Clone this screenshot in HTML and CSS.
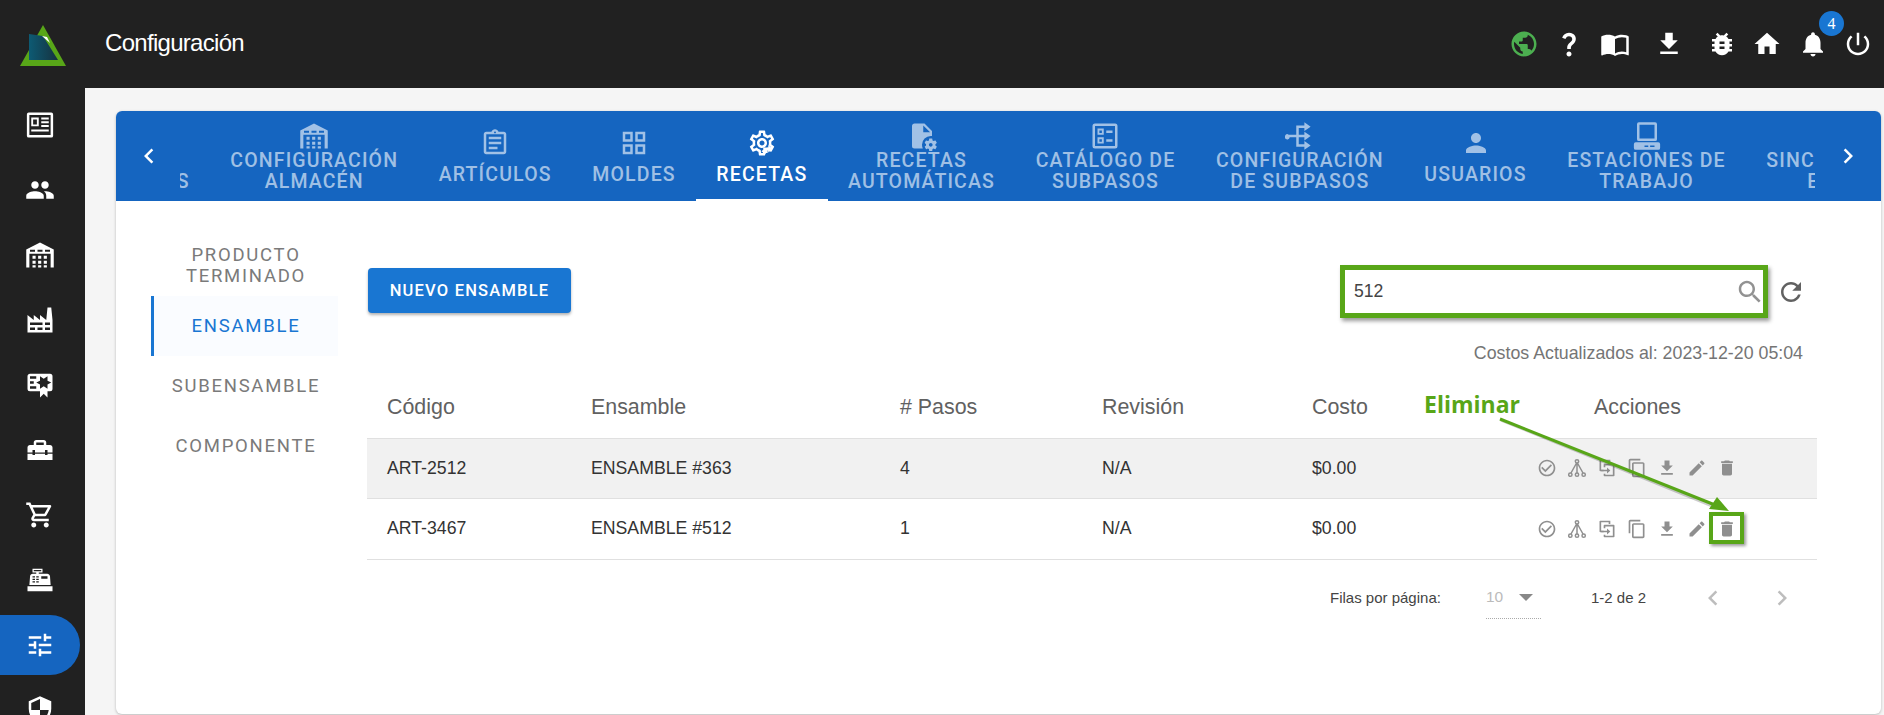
FILE: index.html
```html
<!DOCTYPE html>
<html lang="es">
<head>
<meta charset="utf-8">
<title>Configuración</title>
<link rel="stylesheet" href="styles.css">
</head>
<body>
<svg class="sprite" aria-hidden="true">
  <defs>
    <linearGradient id="logoGrad" x1="0" y1="0" x2="1" y2="0"><stop offset="0" stop-color="#0d5a73"/><stop offset="1" stop-color="#16323f"/></linearGradient>
  </defs>
  <symbol id="i-news" viewBox="0 0 24 24"><path fill-rule="evenodd" d="M3 2h18a1.500 1.500 0 0 1 1.500 1.500v17a1.500 1.500 0 0 1-1.500 1.500H3a1.500 1.500 0 0 1-1.500-1.500v-17A1.500 1.500 0 0 1 3 2zm.5 2v16h17V4zM5 6h6v7H5zm1.500 1.500v4h3v-4zM13 6h6v1.600h-6zm0 3h6v1.600h-6zm0 3h6v1.600h-6zM5 15.500h14v1.600H5z"/></symbol>
  <symbol id="i-group" viewBox="0 0 24 24"><path d="M16 11c1.660 0 2.990-1.340 2.990-3S17.660 5 16 5c-1.660 0-3 1.340-3 3s1.340 3 3 3zm-8 0c1.660 0 2.990-1.340 2.990-3S9.660 5 8 5C6.340 5 5 6.340 5 8s1.340 3 3 3zm0 2c-2.330 0-7 1.170-7 3.500V19h14v-2.500c0-2.330-4.670-3.500-7-3.500zm8 0c-.29 0-.62.02-.97.05 1.160.84 1.970 1.970 1.970 3.450V19h6v-2.500c0-2.330-4.670-3.500-7-3.500z"/></symbol>
  <symbol id="i-warehouse" viewBox="0 0 24 24"><path fill-rule="evenodd" d="M12 2 1 7.500V22h2.500v-11h17v11H23V7.500zM4 7.800h4v1.500H4zm6 0h4v1.500h-4zm6 0h4v1.500h-4zM6 12.500h2.500V15H6zm4.500 0H13V15h-2.500zm4.500 0h2.500V15H15zm-9 4h2.500V19H6zm4.500 0H13V19h-2.500zm4.500 0h2.500V19H15zm-9 3.700h2.500V22H6zm4.500 0H13V22h-2.500zm4.500 0h2.500V22H15z"/></symbol>
  <symbol id="i-factory" viewBox="0 0 24 24"><path fill-rule="evenodd" d="M2 22V8l5 4V8l5 4V8l5 4 1-10h3l1 10v10zm2-8v2h10v-2zm12 0v2h4v-2zM4 18v2h4v-2zm6 0v2h4v-2zm6 0v2h4v-2z"/></symbol>
  <symbol id="i-cert" viewBox="0 0 24 24"><path fill-rule="evenodd" d="M4 3C2.890 3 2 3.890 2 5v10a2 2 0 0 0 2 2h8v5l3-3 3 3v-5h2a2 2 0 0 0 2-2V5a2 2 0 0 0-2-2zm8 2 3 2 3-2v3.500l3 1.500-3 1.500V15l-3-2-3 2v-3.500L9 10l3-1.500zM4 5h5v2H4zm0 4h3v2H4zm0 4h5v2H4z"/></symbol>
  <symbol id="i-toolbox" viewBox="0 0 24 24"><path d="M18 16h-2v-1H8v1H6v-1H2v5h20v-5h-4v1zm2-8h-3V6c0-1.100-.9-2-2-2H9C7.900 4 7 4.900 7 6v2H4c-1.100 0-2 .9-2 2v4h4v-2h2v2h8v-2h2v2h4v-4c0-1.100-.9-2-2-2zm-5 0H9V6h6v2z"/></symbol>
  <symbol id="i-cart" viewBox="0 0 24 24"><path d="M15.550 13c.75 0 1.410-.41 1.750-1.030l3.580-6.490c.37-.66-.11-1.480-.87-1.480H5.210l-.94-2H1v2h2l3.600 7.590-1.350 2.440C4.520 15.370 5.480 17 7 17h12v-2H7l1.100-2h7.450zM6.160 6h12.150l-2.760 5H8.530L6.160 6zM7 18c-1.100 0-1.990.9-1.990 2S5.900 22 7 22s2-.9 2-2-.9-2-2-2zm10 0c-1.100 0-1.990.9-1.990 2s.89 2 1.990 2 2-.9 2-2-.9-2-2-2z"/></symbol>
  <symbol id="i-register" viewBox="0 0 24 24"><path fill-rule="evenodd" d="M2 17h20v4H2zM6.250 7H9V6H6V3h8v3h-3v1h6.800c1 0 2 1 2.200 2l.5 7h-17l.55-7c0-1 1-2 2.200-2zM13 9v2h5V9zM6 9v1h2V9zm3 0v1h2V9zm-3 2v1h2v-1zm3 0v1h2v-1zm-3 2v1h2v-1zm3 0v1h2v-1zM7 4v1h6V4z"/></symbol>
  <symbol id="i-tune" viewBox="0 0 24 24"><path d="M3 17v2h6v-2H3zM3 5v2h10V5H3zm10 16v-2h8v-2h-8v-2h-2v6h2zM7 9v2H3v2h4v2h2V9H7zm14 4v-2H11v2h10zm-6-4h2V7h4V5h-4V3h-2v6z"/></symbol>
  <symbol id="i-shield" viewBox="0 0 24 24"><path d="M12 1 3 5v6c0 5.550 3.840 10.740 9 12 5.160-1.260 9-6.450 9-12V5l-9-4zm0 10.990h7c-.53 4.120-3.280 7.790-7 8.940V12H5V6.300l7-3.110v8.800z"/></symbol>
  <symbol id="i-public" viewBox="0 0 24 24"><path d="M12 2C6.480 2 2 6.480 2 12s4.480 10 10 10 10-4.480 10-10S17.520 2 12 2zm-1 17.930c-3.950-.49-7-3.850-7-7.930 0-.62.08-1.210.21-1.790L9 15v1c0 1.100.9 2 2 2v1.930zm6.900-2.540c-.26-.81-1-1.390-1.900-1.390h-1v-3c0-.55-.45-1-1-1H8v-2h2c.55 0 1-.45 1-1V7h2c1.100 0 2-.9 2-2v-.41c2.930 1.190 5 4.060 5 7.410 0 2.080-.8 3.970-2.100 5.390z"/></symbol>
  <symbol id="i-help" viewBox="0 0 24 24"><path d="M11.070 12.850c.77-1.390 2.250-2.210 3.110-3.440.91-1.290.4-3.700-2.180-3.700-1.690 0-2.520 1.280-2.870 2.340L6.540 6.960C7.250 4.830 9.180 3 11.990 3c2.350 0 3.960 1.070 4.780 2.410.7 1.150 1.110 3.300.03 4.900-1.200 1.770-2.350 2.310-2.970 3.450-.25.46-.35.76-.35 2.240h-2.890c-.01-.78-.13-2.050.48-3.150zM14 20c0 1.100-.9 2-2 2s-2-.9-2-2 .9-2 2-2 2 .9 2 2z"/></symbol>
  <symbol id="i-book" viewBox="0 0 24 24"><path d="M21 5c-1.110-.35-2.330-.5-3.500-.5-1.950 0-4.050.4-5.500 1.500-1.450-1.100-3.550-1.500-5.500-1.500S2.450 4.900 1 6v14.650c0 .25.25.5.5.5.1 0 .15-.05.25-.05C3.100 20.450 5.050 20 6.500 20c1.950 0 4.050.4 5.500 1.500 1.350-.85 3.800-1.500 5.500-1.500 1.650 0 3.350.3 4.750 1.050.1.05.15.05.25.05.25 0 .5-.25.5-.5V6c-.6-.45-1.250-.75-2-1zm0 13.500c-1.100-.35-2.300-.5-3.500-.5-1.700 0-4.150.65-5.500 1.500V8c1.350-.85 3.800-1.500 5.500-1.500 1.200 0 2.400.15 3.500.5v11.500z"/></symbol>
  <symbol id="i-download" viewBox="0 0 24 24"><path d="M19 9h-4V3H9v6H5l7 7 7-7zM5 18v2h14v-2H5z"/></symbol>
  <symbol id="i-bug" viewBox="0 0 24 24"><path d="M20 8h-2.810c-.45-.78-1.070-1.450-1.820-1.960L17 4.410 15.590 3l-2.170 2.170C12.960 5.060 12.490 5 12 5c-.49 0-.96.06-1.410.17L8.410 3 7 4.410l1.620 1.630C7.880 6.550 7.260 7.220 6.810 8H4v2h2.090c-.05.33-.09.66-.09 1v1H4v2h2v1c0 .34.04.67.09 1H4v2h2.810c1.040 1.790 2.970 3 5.190 3s4.150-1.210 5.190-3H20v-2h-2.090c.05-.33.09-.66.09-1v-1h2v-2h-2v-1c0-.34-.04-.67-.09-1H20V8zm-6 8h-4v-2h4v2zm0-4h-4v-2h4v2z"/></symbol>
  <symbol id="i-home" viewBox="0 0 24 24"><path d="M10 20v-6h4v6h5v-8h3L12 3 2 12h3v8z"/></symbol>
  <symbol id="i-bell" viewBox="0 0 24 24"><path d="M12 22c1.100 0 2-.9 2-2h-4c0 1.100.89 2 2 2zm6-6v-5c0-3.070-1.640-5.640-4.500-6.320V4c0-.83-.67-1.500-1.500-1.500s-1.500.67-1.500 1.500v.68C7.630 5.360 6 7.920 6 11v5l-2 2v1h16v-1l-2-2z"/></symbol>
  <symbol id="i-power" viewBox="0 0 24 24"><path d="M13 3h-2v10h2V3zm4.830 2.170-1.420 1.420C17.990 7.860 19 9.810 19 12c0 3.870-3.130 7-7 7s-7-3.130-7-7c0-2.190 1.010-4.140 2.580-5.420L6.170 5.170C4.230 6.820 3 9.260 3 12c0 4.970 4.030 9 9 9s9-4.030 9-9c0-2.740-1.230-5.180-3.170-6.830z"/></symbol>
  <symbol id="i-left" viewBox="0 0 24 24"><path d="M15.410 7.410 14 6l-6 6 6 6 1.410-1.410L10.830 12z"/></symbol>
  <symbol id="i-right" viewBox="0 0 24 24"><path d="M10 6 8.590 7.410 13.170 12l-4.580 4.590L10 18l6-6z"/></symbol>
  <symbol id="i-assign" viewBox="0 0 24 24"><path d="M7 15h7v2H7zm0-4h10v2H7zm0-4h10v2H7z"/><path d="M19 3h-4.180C14.400 1.840 13.300 1 12 1c-1.300 0-2.400.84-2.820 2H5c-1.100 0-2 .9-2 2v14c0 1.100.9 2 2 2h14c1.100 0 2-.9 2-2V5c0-1.100-.9-2-2-2zm-7-.25c.41 0 .75.34.75.75s-.34.75-.75.75-.75-.34-.75-.75.34-.75.75-.75zM19 19H5V5h14v14z"/></symbol>
  <symbol id="i-grid" viewBox="0 0 24 24"><path d="M3 3v8h8V3H3zm6 6H5V5h4v4zm-6 4v8h8v-8H3zm6 6H5v-4h4v4zm4-16v8h8V3h-8zm6 6h-4V5h4v4zm-6 4v8h8v-8h-8zm6 6h-4v-4h4v4z"/></symbol>
  <symbol id="i-cog" viewBox="0 0 24 24"><path d="M19.430 12.980c.04-.32.07-.64.07-.98 0-.34-.03-.66-.07-.98l2.110-1.650c.19-.15.24-.42.12-.64l-2-3.460c-.09-.16-.26-.25-.44-.25-.06 0-.12.01-.17.03l-2.490 1c-.52-.4-1.080-.73-1.690-.98l-.38-2.650C14.460 2.180 14.250 2 14 2h-4c-.25 0-.46.18-.49.42l-.38 2.650c-.61.25-1.170.59-1.690.98l-2.490-1c-.06-.02-.12-.03-.18-.03-.17 0-.34.09-.43.25l-2 3.460c-.13.22-.07.49.12.64l2.110 1.650c-.04.32-.07.65-.07.98 0 .33.03.66.07.98l-2.110 1.650c-.19.15-.24.42-.12.64l2 3.460c.09.16.26.25.44.25.06 0 .12-.01.17-.03l2.490-1c.52.4 1.080.73 1.690.98l.38 2.650c.03.24.24.42.49.42h4c.25 0 .46-.18.49-.42l.38-2.650c.61-.25 1.170-.59 1.690-.98l2.490 1c.06.02.12.03.18.03.17 0 .34-.09.43-.25l2-3.460c.12-.22.07-.49-.12-.64l-2.110-1.650zm-1.980-1.710c.04.31.05.52.05.73 0 .21-.02.43-.05.73l-.14 1.130.89.7 1.080.84-.7 1.210-1.270-.51-1.040-.42-.9.68c-.43.32-.84.56-1.250.73l-1.060.43-.16 1.130-.2 1.350h-1.400l-.19-1.350-.16-1.130-1.060-.43c-.43-.18-.83-.41-1.230-.71l-.91-.7-1.060.43-1.270.51-.7-1.210 1.080-.84.89-.7-.14-1.130c-.03-.31-.05-.54-.05-.74s.02-.43.05-.73l.14-1.130-.89-.7-1.080-.84.7-1.210 1.270.51 1.040.42.9-.68c.43-.32.84-.56 1.250-.73l1.060-.43.16-1.130.2-1.350h1.390l.19 1.350.16 1.130 1.060.43c.43.18.83.41 1.230.71l.91.7 1.060-.43 1.270-.51.7 1.210-1.070.85-.89.7.14 1.130zM12 8c-2.210 0-4 1.790-4 4s1.790 4 4 4 4-1.790 4-4-1.790-4-4-4zm0 6c-1.100 0-2-.9-2-2s.9-2 2-2 2 .9 2 2-.9 2-2 2z"/><path d="M13 15.500h4v-2l3.500 3-3.500 3v-2h-4zm2 5.500-3.500-2.500 2-1.500v1h3v2h-1.500z"/></symbol>
  <symbol id="i-filecog" viewBox="0 0 24 24"><path d="M6 2C4.890 2 4 2.900 4 4v16a2 2 0 0 0 2 2h6.680A7 7 0 0 1 12 19a7 7 0 0 1 7-7 7 7 0 0 1 1 .08V8l-6-6H6m7 1.500L18.500 9H13V3.500M18 14c-.13 0-.24.09-.26.21l-.19 1.320c-.3.13-.59.29-.85.47l-1.240-.5c-.11 0-.24 0-.31.13l-1 1.730c-.06.11-.04.24.06.32l1.060.82c-.02.17-.03.33-.03.5s.01.33.03.5l-1.060.82c-.09.08-.12.21-.06.32l1 1.730c.06.13.19.13.31.13l1.240-.5c.26.18.54.35.85.47l.19 1.320c.02.12.12.21.26.21h2c.11 0 .22-.09.24-.21l.19-1.320c.3-.13.57-.29.84-.47l1.230.5c.13 0 .26 0 .33-.13l1-1.730c.06-.11.03-.24-.06-.32l-1.070-.82c.02-.17.04-.33.04-.5s-.01-.33-.04-.5l1.060-.82c.09-.08.12-.21.06-.32l-1-1.730c-.06-.13-.19-.13-.32-.13l-1.230.5c-.27-.18-.54-.35-.85-.47l-.19-1.320A.26.26 0 0 0 20 14h-2m1 3.500c.83 0 1.500.67 1.500 1.500s-.67 1.500-1.500 1.500c-.84 0-1.500-.67-1.500-1.500s.67-1.500 1.500-1.500z"/></symbol>
  <symbol id="i-catalog" viewBox="0 0 24 24"><path fill-rule="evenodd" d="M4 2h16a2 2 0 0 1 2 2v16a2 2 0 0 1-2 2H4a2 2 0 0 1-2-2V4a2 2 0 0 1 2-2zm0 2v16h16V4zm2 2h5v5H6zm1.500 1.500v2h2v-2zM13 7.500h5v2h-5zM6 13h5v5H6zm1.500 1.500v2h2v-2zm5.500 0h5v2h-5z"/></symbol>
  <symbol id="i-flow" viewBox="0 0 24 24"><path d="M3 11h6V3.500h6.500V1l5 3.500-5 3.500V5.500H11V11h4.500V8.500l5 3.500-5 3.500V13H11v5.500h4.500V16l5 3.500-5 3.500v-2.500H9V13H3.800a2 2 0 1 1-.8-2z"/></symbol>
  <symbol id="i-person" viewBox="0 0 24 24"><path d="M12 12c2.210 0 4-1.790 4-4s-1.790-4-4-4-4 1.790-4 4 1.790 4 4 4zm0 2c-2.670 0-8 1.340-8 4v2h16v-2c0-2.660-5.330-4-8-4z"/></symbol>
  <symbol id="i-station" viewBox="0 0 24 24"><path fill-rule="evenodd" d="M5.500 1h13A1.500 1.500 0 0 1 20 2.500v12a1.500 1.500 0 0 1-1.500 1.500h-13A1.500 1.500 0 0 1 4 14.500v-12A1.500 1.500 0 0 1 5.500 1zM6 3v11h12V3zM3 17h18a1.500 1.500 0 0 1 1.500 1.500v3A1.500 1.500 0 0 1 21 23H3a1.500 1.500 0 0 1-1.500-1.500v-3A1.500 1.500 0 0 1 3 17zm7 2.500v1.200h3v-1.200zm4.500 0v1.200h3.500v-1.200z"/></symbol>
  <symbol id="i-check" viewBox="0 0 24 24"><path d="M16.590 7.580 10 14.170l-3.590-3.580L5 12l5 5 8-8zM12 2C6.480 2 2 6.480 2 12s4.480 10 10 10 10-4.480 10-10S17.520 2 12 2zm0 18c-4.420 0-8-3.580-8-8s3.580-8 8-8 8 3.580 8 8-3.580 8-8 8z"/></symbol>
  <symbol id="i-tree" viewBox="0 0 24 24"><g fill="none" stroke="currentColor" stroke-width="1.800"><circle cx="12" cy="4" r="2"/><circle cx="12" cy="20" r="2"/><circle cx="4" cy="20" r="2"/><circle cx="20" cy="20" r="2"/><path d="M12 6v12M11.500 6 4.800 18M12.500 6l6.700 12"/></g></symbol>
  <symbol id="i-copyin" viewBox="0 0 24 24"><path d="M4 2h12v4h-2V4H5v10h3v2H4a1 1 0 0 1-1-1V3a1 1 0 0 1 1-1z"/><path d="M9 7h11a1 1 0 0 1 1 1v13a1 1 0 0 1-1 1H9a1 1 0 0 1-1-1v-2h2v1h9V9h-9v2H8V8a1 1 0 0 1 1-1z"/><path d="M5 14h7v-2.500l4 3.500-4 3.500V16H5z"/></symbol>
  <symbol id="i-copy" viewBox="0 0 24 24"><path d="M16 1H4c-1.100 0-2 .9-2 2v14h2V3h12V1zm3 4H8c-1.100 0-2 .9-2 2v14c0 1.100.9 2 2 2h11c1.100 0 2-.9 2-2V7c0-1.100-.9-2-2-2zm0 16H8V7h11v14z"/></symbol>
  <symbol id="i-edit" viewBox="0 0 24 24"><path d="M3 17.250V21h3.750L17.810 9.940l-3.750-3.750L3 17.250zM20.710 7.040c.39-.39.39-1.020 0-1.410l-2.340-2.340c-.39-.39-1.020-.39-1.410 0l-1.830 1.830 3.750 3.750 1.830-1.830z"/></symbol>
  <symbol id="i-delete" viewBox="0 0 24 24"><path d="M6 19c0 1.100.9 2 2 2h8c1.100 0 2-.9 2-2V7H6v12zM19 4h-3.500l-1-1h-5l-1 1H5v2h14V4z"/></symbol>
  <symbol id="i-search" viewBox="0 0 24 24"><path d="M15.500 14h-.79l-.28-.27C15.410 12.590 16 11.110 16 9.500 16 5.910 13.090 3 9.500 3S3 5.910 3 9.500 5.910 16 9.500 16c1.610 0 3.090-.59 4.230-1.570l.27.28v.79l5 4.990L20.490 19l-4.990-5zm-6 0C7.010 14 5 11.990 5 9.500S7.010 5 9.500 5 14 7.010 14 9.500 11.990 14 9.500 14z"/></symbol>
  <symbol id="i-refresh" viewBox="0 0 24 24"><path d="M17.650 6.350C16.200 4.900 14.210 4 12 4c-4.420 0-7.990 3.580-7.990 8s3.570 8 7.990 8c3.730 0 6.840-2.550 7.730-6h-2.080c-.82 2.330-3.040 4-5.650 4-3.310 0-6-2.690-6-6s2.690-6 6-6c1.660 0 3.140.69 4.220 1.780L13 11h7V4l-2.350 2.350z"/></symbol>
</svg>

<header class="topbar">
  <div class="logo">
    <svg viewBox="0 0 48 42" width="48" height="42">
      <path d="M24 0 47 41H1z" fill="#58a618"/>
      <path d="M10 9 24 11 39 35H10z" fill="url(#logoGrad)"/>
      <path d="M23 11l5 1 3 6z" fill="#fff"/>
    </svg>
  </div>
  <h1 class="title">Configuración</h1>
  <div class="top-actions">
    <span class="top-icon top-icon--green"><svg><use href="#i-public"/></svg></span>
    <span class="top-icon"><svg><use href="#i-help"/></svg></span>
    <span class="top-icon"><svg><use href="#i-book"/></svg></span>
    <span class="top-icon top-icon--gap"><svg><use href="#i-download"/></svg></span>
    <span class="top-icon top-icon--gap2"><svg><use href="#i-bug"/></svg></span>
    <span class="top-icon"><svg><use href="#i-home"/></svg></span>
    <span class="top-icon"><svg><use href="#i-bell"/></svg><b class="badge">4</b></span>
    <span class="top-icon"><svg><use href="#i-power"/></svg></span>
  </div>
</header>

<div class="shell">
  <nav class="sidebar">
    <a class="side-item"><svg><use href="#i-news"/></svg></a>
    <a class="side-item"><svg><use href="#i-group"/></svg></a>
    <a class="side-item"><svg><use href="#i-warehouse"/></svg></a>
    <a class="side-item"><svg><use href="#i-factory"/></svg></a>
    <a class="side-item"><svg><use href="#i-cert"/></svg></a>
    <a class="side-item"><svg><use href="#i-toolbox"/></svg></a>
    <a class="side-item"><svg><use href="#i-cart"/></svg></a>
    <a class="side-item"><svg><use href="#i-register"/></svg></a>
    <a class="side-item side-item--active"><svg><use href="#i-tune"/></svg></a>
    <a class="side-item"><svg><use href="#i-shield"/></svg></a>
  </nav>

  <main class="main">
    <section class="card">
      <div class="tabbar">
        <span class="tab-arrow tab-arrow--left"><svg><use href="#i-left"/></svg></span>
        <div class="tab-scroller">
          <div class="tab-track">
            <a class="tab tab--clipped"><svg class="tab-icon"><use href="#i-assign"/></svg><span class="tab-label">PLANTA<br>ALMACENES</span></a>
            <a class="tab"><svg class="tab-icon"><use href="#i-warehouse"/></svg><span class="tab-label">CONFIGURACIÓN<br>ALMACÉN</span></a>
            <a class="tab tab--one"><svg class="tab-icon"><use href="#i-assign"/></svg><span class="tab-label">ARTÍCULOS</span></a>
            <a class="tab tab--one"><svg class="tab-icon"><use href="#i-grid"/></svg><span class="tab-label">MOLDES</span></a>
            <a class="tab tab--one tab--active"><svg class="tab-icon"><use href="#i-cog"/></svg><span class="tab-label">RECETAS</span></a>
            <a class="tab"><svg class="tab-icon"><use href="#i-filecog"/></svg><span class="tab-label">RECETAS<br>AUTOMÁTICAS</span></a>
            <a class="tab"><svg class="tab-icon"><use href="#i-catalog"/></svg><span class="tab-label">CATÁLOGO DE<br>SUBPASOS</span></a>
            <a class="tab"><svg class="tab-icon"><use href="#i-flow"/></svg><span class="tab-label">CONFIGURACIÓN<br>DE SUBPASOS</span></a>
            <a class="tab tab--one"><svg class="tab-icon"><use href="#i-person"/></svg><span class="tab-label">USUARIOS</span></a>
            <a class="tab"><svg class="tab-icon"><use href="#i-station"/></svg><span class="tab-label">ESTACIONES DE<br>TRABAJO</span></a>
            <a class="tab tab--last"><svg class="tab-icon"><use href="#i-assign"/></svg><span class="tab-label">SINCRONIZACIÓN<br>EXTERNA</span></a>
          </div>
        </div>
        <span class="tab-arrow"><svg><use href="#i-right"/></svg></span>
      </div>

      <div class="card-body">
        <aside class="subtabs">
          <a class="subtab">PRODUCTO<br>TERMINADO</a>
          <a class="subtab subtab--active">ENSAMBLE</a>
          <a class="subtab">SUBENSAMBLE</a>
          <a class="subtab">COMPONENTE</a>
        </aside>

        <div class="content">
          <div class="toolbar">
            <button class="primary-btn">NUEVO ENSAMBLE</button>
            <div class="search-group">
              <div class="search-box">
                <span class="search-value">512</span>
                <svg class="search-icon"><use href="#i-search"/></svg>
              </div>
              <svg class="refresh-icon"><use href="#i-refresh"/></svg>
            </div>
          </div>
          <p class="updated">Costos Actualizados al: 2023-12-20 05:04</p>

          <table class="table">
            <colgroup>
              <col class="c-code"><col class="c-name"><col class="c-steps"><col class="c-rev"><col class="c-cost"><col class="c-actions">
            </colgroup>
            <thead>
              <tr><th>Código</th><th>Ensamble</th><th># Pasos</th><th>Revisión</th><th>Costo</th><th class="center">Acciones</th></tr>
            </thead>
            <tbody>
              <tr class="row--hover">
                <td>ART-2512</td><td>ENSAMBLE #363</td><td>4</td><td>N/A</td><td>$0.00</td>
                <td><div class="actions">
                  <svg><use href="#i-check"/></svg><svg><use href="#i-tree"/></svg><svg><use href="#i-copyin"/></svg><svg><use href="#i-copy"/></svg><svg><use href="#i-download"/></svg><svg><use href="#i-edit"/></svg><svg><use href="#i-delete"/></svg>
                </div></td>
              </tr>
              <tr class="row--last">
                <td>ART-3467</td><td>ENSAMBLE #512</td><td>1</td><td>N/A</td><td>$0.00</td>
                <td><div class="actions">
                  <svg><use href="#i-check"/></svg><svg><use href="#i-tree"/></svg><svg><use href="#i-copyin"/></svg><svg><use href="#i-copy"/></svg><svg><use href="#i-download"/></svg><svg><use href="#i-edit"/></svg><svg><use href="#i-delete"/></svg>
                </div></td>
              </tr>
            </tbody>
          </table>

          <div class="pager">
            <span class="pager-label">Filas por página:</span>
            <span class="pager-select"><span>10</span><i class="caret"></i></span>
            <span class="pager-range">1-2 de 2</span>
            <svg class="pager-arrow"><use href="#i-left"/></svg>
            <svg class="pager-arrow pager-arrow--next"><use href="#i-right"/></svg>
          </div>
        </div>
      </div>
    </section>
  </main>
</div>

<div class="note-label">Eliminar</div>
<div class="note-box"></div>
<svg class="note-arrow" viewBox="0 0 250 110" width="250" height="110">
  <path class="note-arrow-shadow" d="M11 10 225 97"/>
  <path class="note-arrow-line" d="M10 9 225 95"/>
  <path class="note-arrow-head" d="M239 101 219 99 227 87z"/>
</svg>
</body>
</html>
```

FILE: styles.css
```css
* { box-sizing: border-box; }
html, body { margin: 0; height: 715px; overflow: hidden; }
body { position: relative; background: #f5f5f5; font-family: "Liberation Sans", Arial, sans-serif; color: #333; }
.sprite { position: absolute; width: 0; height: 0; }

.topbar { height: 88px; background: #212121; color: #fff; display: flex; align-items: center; }
.logo { width: 105px; padding: 3px 0 0 19px; display: flex; }
.title { margin: 0 0 3px; font-size: 24px; font-weight: 400; letter-spacing: -.7px; color: #fff; }
.top-actions { margin-left: auto; display: flex; align-items: center; padding-right: 3px; }
.top-icon { position: relative; width: 45.5px; height: 46px; display: flex; align-items: center; justify-content: center; }
.top-icon svg { width: 30px; height: 30px; fill: #fff; }
.top-icon--green svg { fill: #4caf50; }
.top-icon--gap { margin-left: 9px; }
.top-icon--gap2 { margin-left: 7px; }
.badge { position: absolute; top: -10px; left: 29px; width: 25px; height: 25px; border-radius: 50%; background: #1976d2; color: #fff; font: 400 16px/25px "Liberation Serif", serif; text-align: center; }

.shell { display: flex; height: 627px; overflow: hidden; }
.sidebar { width: 85px; flex: none; background: #212121; padding-top: 7px; display: flex; flex-direction: column; gap: 5px; }
.side-item { width: 80px; height: 60px; flex: none; display: flex; align-items: center; justify-content: center; }
.side-item svg { width: 30px; height: 30px; fill: #fff; }
.side-item--active { background: #1565c0; border-radius: 0 30px 30px 0; }

.main { flex: 1; min-width: 0; padding: 23px 3px 1px 31px; }
.card { height: 100%; background: #fff; border-radius: 6px; box-shadow: 0 1px 3px rgba(0,0,0,.25); overflow: hidden; }

.tabbar { height: 90px; background: #1565c0; display: flex; align-items: stretch; }
.tab-arrow { width: 64px; flex: none; display: flex; align-items: center; justify-content: center; }
.tab-arrow--left { padding-left: 2px; }
.tab-arrow:last-child { width: 66px; }
.tab-arrow svg { width: 30px; height: 30px; fill: #fff; }
.tab-scroller { flex: 1; min-width: 0; overflow: hidden; }
.tab-track { display: flex; height: 100%; width: max-content; }
.tab { position: relative; flex: none; padding: 2px 20.300px 0; display: flex; flex-direction: column; align-items: center; justify-content: center; color: rgba(255,255,255,.6); }
.tab-icon { width: 30px; height: 30px; margin: -1px 0; fill: currentColor; display: block; flex: none; }
.tab-label { font: 500 19.500px/21px Roboto, sans-serif; letter-spacing: 1.150px; text-align: center; white-space: nowrap; }
.tab--one .tab-icon { margin-bottom: 6px; }
.tab--clipped { width: 200px; margin-left: -170px; align-items: flex-end; }
.tab--clipped .tab-icon { visibility: hidden; }
.tab--active { color: #fff; }
.tab--active::after { content: ""; position: absolute; left: 0; right: 0; bottom: 0; height: 2px; background: #fff; }

.card-body { display: flex; padding: 35px 0 0 35px; }
.subtabs { width: 187px; flex: none; display: flex; flex-direction: column; }
.subtab { height: 60px; display: flex; align-items: center; justify-content: center; text-align: center; border-left: 3px solid transparent; font: 400 18.500px/21px Roboto, sans-serif; letter-spacing: 1.750px; color: #7a7a7a; }
.subtab--active { border-left-color: #1976d2; background: #fafcff; color: #1976d2; }

.content { margin-left: 29px; width: 1450px; padding-top: 28px; }
.toolbar { display: flex; align-items: center; justify-content: space-between; padding: 0 11px 0 1px; height: 53px; }
.primary-btn { width: 203px; height: 45px; border: 0; border-radius: 4px; background: #1976d2; color: #fff; box-shadow: 0 2px 3px rgba(0,0,0,.3); font: 500 16.500px Roboto, sans-serif; letter-spacing: 1.200px; }
.search-group { display: flex; align-items: center; gap: 8px; margin-top: 2px; }
.search-box { width: 428px; height: 53px; border: 5px solid #58a618; box-shadow: 2px 3px 4px rgba(0,0,0,.4); background: #fff; display: flex; align-items: center; justify-content: space-between; padding: 0 0 0 9px; }
.search-value { font-size: 17.600px; color: #444; }
.search-icon { width: 30px; height: 30px; margin-right: -2px; fill: #929292; }
.refresh-icon { width: 30px; height: 30px; fill: #616161; }
.updated { margin: 26px 14px 0 0; text-align: right; font-size: 17.800px; line-height: 20px; color: #757575; }

.table { width: 100%; margin-top: 15px; border-collapse: collapse; table-layout: fixed; }
.c-code { width: 204px; } .c-name { width: 309px; } .c-steps { width: 202px; } .c-rev { width: 210px; } .c-cost { width: 166px; } .c-actions { width: 359px; }
.table th { height: 60px; padding: 0 0 0 20px; text-align: left; font-weight: 400; font-size: 21.400px; color: #616161; }
.table th.center { padding: 0; text-align: center; }
.table td { height: 60px; padding: 0 0 0 20px; font-size: 17.700px; color: #333; border-bottom: 1px solid #e0e0e0; }
.table .row--last td { height: 61px; }
.table thead tr { border-bottom: 1px solid #e0e0e0; }
.row--hover td { background: #f1f1f1; }
.table td:last-child { padding: 0 2px 0 0; }
.actions { display: flex; justify-content: center; gap: 10px; }
.actions svg { width: 20px; height: 20px; fill: #8f8f8f; color: #8f8f8f; flex: none; }

.pager { height: 76px; display: flex; align-items: center; padding-left: 963px; font-size: 15px; color: #444; }
.pager-label { width: 156px; }
.pager-select { width: 55px; height: 43px; display: flex; align-items: center; justify-content: space-between; border-bottom: 1px dotted #aaa; color: #bbb; font-size: 15.500px; }
.caret { width: 0; height: 0; margin-right: 8px; border: 7px solid transparent; border-top: 7px solid #888; border-bottom: 0; }
.pager-range { margin-left: 50px; width: 107px; }
.pager-arrow { width: 30px; height: 30px; fill: #bdbdbd; }
.pager-arrow--next { margin-left: 39px; }

.note-label { position: absolute; left: 1424px; top: 390px; font-family: "Open Sans", sans-serif; font-size: 23px; font-weight: 700; line-height: 28px; color: #58a618; }
.note-box { position: absolute; left: 1709px; top: 512px; width: 35px; height: 32px; border: 4px solid #58a618; box-shadow: 2px 2px 3px rgba(0,0,0,.4); }
.note-arrow { position: absolute; left: 1490px; top: 410px; }
.note-arrow-shadow { stroke: rgba(0,0,0,.2); stroke-width: 3px; fill: none; }
.note-arrow-line { stroke: #58a618; stroke-width: 3px; fill: none; }
.note-arrow-head { fill: #58a618; }
```
